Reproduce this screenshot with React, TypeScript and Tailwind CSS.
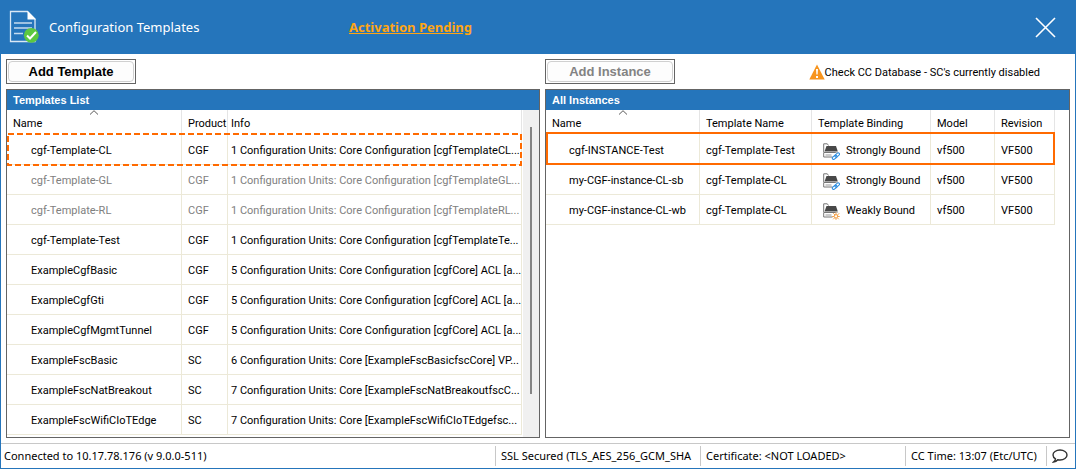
import React from "react";

type Template = { name: string; product: string; info: string; muted?: boolean };
type Instance = { name: string; template: string; binding: "Strongly Bound" | "Weakly Bound"; model: string; revision: string };

const templates: Template[] = [
  { name: "cgf-Template-CL", product: "CGF", info: "1 Configuration Units: Core Configuration [cgfTemplateCL..." },
  { name: "cgf-Template-GL", product: "CGF", info: "1 Configuration Units: Core Configuration [cgfTemplateGL...", muted: true },
  { name: "cgf-Template-RL", product: "CGF", info: "1 Configuration Units: Core Configuration [cgfTemplateRL...", muted: true },
  { name: "cgf-Template-Test", product: "CGF", info: "1 Configuration Units: Core Configuration [cgfTemplateTe..." },
  { name: "ExampleCgfBasic", product: "CGF", info: "5 Configuration Units: Core Configuration [cgfCore] ACL [a..." },
  { name: "ExampleCgfGti", product: "CGF", info: "5 Configuration Units: Core Configuration [cgfCore] ACL [a..." },
  { name: "ExampleCgfMgmtTunnel", product: "CGF", info: "5 Configuration Units: Core Configuration [cgfCore] ACL [a..." },
  { name: "ExampleFscBasic", product: "SC", info: "6 Configuration Units: Core [ExampleFscBasicfscCore] VP..." },
  { name: "ExampleFscNatBreakout", product: "SC", info: "7 Configuration Units: Core [ExampleFscNatBreakoutfscC..." },
  { name: "ExampleFscWifiCIoTEdge", product: "SC", info: "7 Configuration Units: Core [ExampleFscWifiCIoTEdgefsc..." },
];

const instances: Instance[] = [
  { name: "cgf-INSTANCE-Test", template: "cgf-Template-Test", binding: "Strongly Bound", model: "vf500", revision: "VF500" },
  { name: "my-CGF-instance-CL-sb", template: "cgf-Template-CL", binding: "Strongly Bound", model: "vf500", revision: "VF500" },
  { name: "my-CGF-instance-CL-wb", template: "cgf-Template-CL", binding: "Weakly Bound", model: "vf500", revision: "VF500" },
];

const th = "relative h-[25px] border-r border-[#e5e5e5] pt-[3px] pl-[6px] text-left font-normal whitespace-nowrap";
const td = "h-[30px] border-r border-b border-[#ece9d8] pt-[3px] pl-[6px] whitespace-nowrap";
const infoHead = "h-[25px] border-r border-[#e5e5e5] pt-[3px] pl-[3px] text-left font-normal whitespace-nowrap";
const infoCell = "h-[30px] border-r border-b border-[#ece9d8] pt-[3px] pl-[3px] whitespace-nowrap";

function SortArrow() {
  return (
    <svg className="absolute top-0 left-1/2 -translate-x-1/2" width="9" height="5" viewBox="0 0 9 5" fill="none" aria-hidden="true">
      <path d="M.5 4.500 4.500.7 8.500 4.500" stroke="#5a5a5a" />
    </svg>
  );
}

function DocumentIcon() {
  return (
    <svg width="30" height="34" viewBox="0 0 30 34" fill="none" aria-hidden="true">
      <path d="M1.500 1.500h17l7.500 7.500V31.500H1.500z" stroke="#d9e8f5" strokeWidth="1.300" />
      <path d="M18.500 1 27 9.500h-8.500z" fill="#fff" />
      <path d="M5 13h18M5 18h18M5 23.500h9" stroke="#c5dcf0" strokeWidth="1.300" />
      <circle cx="22.300" cy="25.300" r="7.400" fill="#5cc840" />
      <path d="m18 25.500 3 3 6-6.500" stroke="#fff" strokeWidth="2" />
    </svg>
  );
}

function BindingIcon({ weak }: { weak: boolean }) {
  return (
    <svg className="shrink-0" width="17" height="17" viewBox="0 0 17 17" fill="none" aria-hidden="true">
      <path d="M.7 9V.8h3.600l1.200 1.700" stroke="#777" />
      <path d="M3.500 3h9.500l1.800 5.500H1.500z" fill="#484848" />
      <path d="M.7 9.500h14V14H.7z" fill="#fff" stroke="#777" />
      <path d="M2.500 12h6" stroke="#999" />
      <path d="M9.500 17v-5L13 9.500h4V17z" fill="#fff" />
      {weak ? (
        <g stroke="#f5a24b" strokeLinecap="round">
          <path d="m10.500 10.500 1.500 1.500M13 9.800v1.200M9.500 13.500h1.200M16 10.500l-1.500 1.500M16.300 13.500h-1M15.500 16l-1-1M10.500 16l1.500-1.500M13 16.500v-1" />
          <circle cx="13" cy="13.300" r="1.800" />
        </g>
      ) : (
        <g stroke="#2f8fe0" strokeWidth="1.100">
          <rect x="-2.600" y="-1.300" width="5.200" height="2.600" rx="1.300" transform="translate(11.600 14.300) rotate(-40)" />
          <rect x="-2.600" y="-1.300" width="5.200" height="2.600" rx="1.300" transform="translate(14.200 12) rotate(-40)" />
        </g>
      )}
    </svg>
  );
}

function ActionButton({ children, disabled }: { children: React.ReactNode; disabled?: boolean }) {
  return (
    <button
      type="button"
      disabled={disabled}
      className="h-[25px] w-[130px] border border-[#646464] bg-white p-px font-['Liberation_Sans',sans-serif] font-bold text-black disabled:text-[#838383]"
    >
      <span className="flex h-full items-center justify-center rounded border border-[#d0d0d0] bg-[#fdfdfd] text-[13px]">{children}</span>
    </button>
  );
}

function PanelTitle({ children }: { children: React.ReactNode }) {
  return (
    <h2 className="h-5 shrink-0 bg-[#2575bb] px-[6px] font-['Liberation_Sans',sans-serif] text-[11px] leading-5 font-bold text-white">
      {children}
    </h2>
  );
}

export default function App() {
  return (
    <div className="flex h-screen flex-col border border-t-0 border-[#2575bb] bg-white font-[Roboto,sans-serif] text-[11px] text-black">
      <header className="flex h-[54px] shrink-0 items-center bg-[#2575bb] pr-[19px] pl-2 font-['Noto_Sans',sans-serif]">
        <DocumentIcon />
        <h1 className="ml-[10px] w-[300px] pt-[2px] text-[13px] text-white">Configuration Templates</h1>
        <a href="#activation" className="pt-[2px] text-[13px] font-bold text-[#ffa514] underline">
          Activation Pending
        </a>
        <button type="button" aria-label="Close" className="ml-auto">
          <svg width="21" height="21" viewBox="0 0 21 21" fill="none" aria-hidden="true">
            <path d="m1 1 19 19M20 1 1 20" stroke="#fff" strokeWidth="1.600" />
          </svg>
        </button>
      </header>

      <main className="grid min-h-0 flex-1 grid-cols-[534fr_525fr] gap-x-[5px] px-[5px] pt-[5px] pb-[5px]">
        <section className="flex min-h-0 min-w-0 flex-col gap-[5px]">
          <ActionButton>Add Template</ActionButton>
          <div className="flex min-h-0 flex-1 flex-col border border-[#646464]">
            <PanelTitle>Templates List</PanelTitle>
            <div className="flex min-h-0 flex-1 gap-px overflow-hidden">
              <div className="min-w-0 flex-1 overflow-hidden">
                <table className="w-full table-fixed border-separate border-spacing-0">
                  <colgroup>
                    <col className="w-[175px]" />
                    <col className="w-[46px]" />
                    <col />
                  </colgroup>
                  <thead>
                    <tr>
                      <th className={th}>Name<SortArrow /></th>
                      <th className={th}>Product</th>
                      <th className={infoHead}>Info</th>
                    </tr>
                  </thead>
                  <tbody>
                    {templates.map((t, i) => (
                      <tr key={t.name} className={t.muted ? "text-[#808080]" : i === 0 ? "relative" : ""}>
                        <td className={td}>
                          <span className="pl-[18px]">{t.name}</span>
                          {i === 0 && (
                            <svg className="pointer-events-none absolute -top-[2px] left-0 h-[33px] w-full" fill="none" aria-hidden="true">
                              <rect x="1" y="1" width="100%" height="31" className="w-[calc(100%-2px)]" stroke="#ff6a00" strokeWidth="2" strokeDasharray="6 3" />
                            </svg>
                          )}
                        </td>
                        <td className={td}>{t.product}</td>
                        <td className={infoCell}>{t.info}</td>
                      </tr>
                    ))}
                  </tbody>
                </table>
              </div>
              <div className="flex w-4 shrink-0 justify-center bg-[#f0f0f0] pt-[17px] pb-[43px]">
                <div className="w-[2px] bg-[#858585]" />
              </div>
            </div>
          </div>
        </section>

        <section className="flex min-h-0 min-w-0 flex-col gap-[5px]">
          <div className="flex items-center justify-between pr-[30px]">
            <ActionButton disabled>Add Instance</ActionButton>
            <p className="flex items-center">
              <svg width="16" height="16" viewBox="0 0 16 16" aria-hidden="true">
                <path d="M8 .5 15.700 15.500H.3z" fill="#f7941d" />
                <path d="M7 5h2l-.4 5.500H7.400zM7 12h2v2H7z" fill="#fff" />
              </svg>
              <span className="pt-[3px]">Check CC Database - SC's currently disabled</span>
            </p>
          </div>
          <div className="flex min-h-0 flex-1 flex-col border border-[#646464]">
            <PanelTitle>All Instances</PanelTitle>
            <div className="pr-[14px]">
              <table className="w-full table-fixed border-separate border-spacing-0">
                <colgroup>
                  <col />
                  <col className="w-[112px]" />
                  <col className="w-[119px]" />
                  <col className="w-[64px]" />
                  <col className="w-[60px]" />
                </colgroup>
                <thead>
                  <tr>
                    <th className={th}>Name<SortArrow /></th>
                    <th className={th}>Template Name</th>
                    <th className={th}>Template Binding</th>
                    <th className={th}>Model</th>
                    <th className={th}>Revision</th>
                  </tr>
                </thead>
                <tbody>
                  {instances.map((n, i) => (
                    <tr key={n.name} className={i === 0 ? "relative" : ""}>
                      <td className={td}>
                        <span className="pl-[17px]">{n.name}</span>
                        {i === 0 && <div className="pointer-events-none absolute -top-[3px] left-0 h-[33px] w-full border-2 border-[#ff6a00]" />}
                      </td>
                      <td className={td}>{n.template}</td>
                      <td className={td}>
                        <span className="flex items-center gap-[6px] pl-[5px]">
                          <BindingIcon weak={n.binding === "Weakly Bound"} />
                          {n.binding}
                        </span>
                      </td>
                      <td className={td}>{n.model}</td>
                      <td className={td}>{n.revision}</td>
                    </tr>
                  ))}
                </tbody>
              </table>
            </div>
          </div>
        </section>
      </main>

      <footer className="flex h-[25px] shrink-0 items-stretch border-t border-[#c8c8c8] py-[2px] font-['Noto_Sans',sans-serif] text-[11px] leading-5 whitespace-nowrap">
        <span className="flex-1 pl-[3px]">Connected to 10.17.78.176 (v 9.0.0-511)</span>
        <span className="w-[205px] border-l border-[#c8c8c8] px-[5px]">
          <span className="block overflow-hidden">SSL Secured (TLS_AES_256_GCM_SHA</span>
        </span>
        <span className="w-[205px] border-l border-[#c8c8c8] pl-[5px]">Certificate: &lt;NOT LOADED&gt;</span>
        <span className="w-[141px] border-l border-[#c8c8c8] pl-[5px]">CC Time: 13:07 (Etc/UTC)</span>
        <button type="button" aria-label="Messages" className="flex w-[29px] items-center border-l border-[#c8c8c8] pl-[5px]">
          <svg width="16" height="14" viewBox="0 0 16 14" fill="none" aria-hidden="true">
            <path d="M3.500 9.800C1.800 8.900 1 7.500 1 6c0-2.800 3-5 7-5s7 2.200 7 5-3 5-7 5c-.8 0-1.500-.1-2.200-.2C4.800 12 3.300 12.800 1.500 13c1.200-.9 1.900-2 2-3.200z" stroke="#333" strokeWidth="1.400" />
          </svg>
        </button>
      </footer>
    </div>
  );
}
